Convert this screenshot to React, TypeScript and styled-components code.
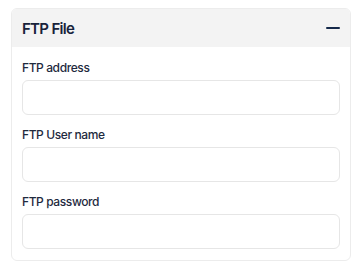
import { createGlobalStyle } from "styled-components";
import styled from "styled-components";

const GlobalStyle = createGlobalStyle`
   html, body {
      margin: 0;
      padding: 0;
      background: #ffffff;
   }
   body {
      font-family: Inter, "Noto Sans", sans-serif;
      color: #1a2538;
   }
`;

const Page = styled.div`
   padding: 8px 0 0 11px;
`;

const Card = styled.section`
   width: 340px;
   box-sizing: border-box;
   border: 1px solid #ececec;
   border-radius: 6px;
   overflow: hidden;
   background: #fff;
`;

const CardHeader = styled.div`
   height: 38px;
   background: #f3f3f3;
   display: flex;
   align-items: center;
   justify-content: space-between;
   padding: 0 10px 0 10px;
`;

const Title = styled.h2`
   margin: 0;
   font-size: 15px;
   font-weight: 600;
   letter-spacing: -0.7px;
   color: #17223a;
`;

const CollapseButton = styled.button`
   border: 0;
   background: none;
   padding: 0;
   width: 14px;
   height: 14px;
   display: flex;
   align-items: center;
   cursor: pointer;

   &::before {
      content: "";
      display: block;
      width: 14px;
      height: 2px;
      border-radius: 1px;
      background: #15294a;
   }
`;

const CardBody = styled.div`
   padding: 12px 10px 11px 10px;
   display: flex;
   flex-direction: column;
   gap: 11px;
`;

const Field = styled.label`
   display: flex;
   flex-direction: column;
   gap: 3px;
`;

const Label = styled.span`
   font-size: 12px;
   line-height: 18px;
   font-weight: 500;
   letter-spacing: -0.4px;
   color: #1e2a3e;
`;

const Input = styled.input`
   box-sizing: border-box;
   width: 318px;
   height: 35px;
   border: 1px solid #e6e6e6;
   border-radius: 6px;
   background: #fff;
   padding: 0 10px;
   font: inherit;
   font-size: 13px;
   outline: none;
`;

const fields = [
   { label: "FTP address", type: "text" },
   { label: "FTP User name", type: "text" },
   { label: "FTP password", type: "password" },
];

export default function App() {
   return (
      <Page>
         <GlobalStyle />
         <Card>
            <CardHeader>
               <Title>FTP File</Title>
               <CollapseButton aria-label="Collapse" />
            </CardHeader>
            <CardBody>
               {fields.map((f) => (
                  <Field key={f.label}>
                     <Label>{f.label}</Label>
                     <Input type={f.type} />
                  </Field>
               ))}
            </CardBody>
         </Card>
      </Page>
   );
}
